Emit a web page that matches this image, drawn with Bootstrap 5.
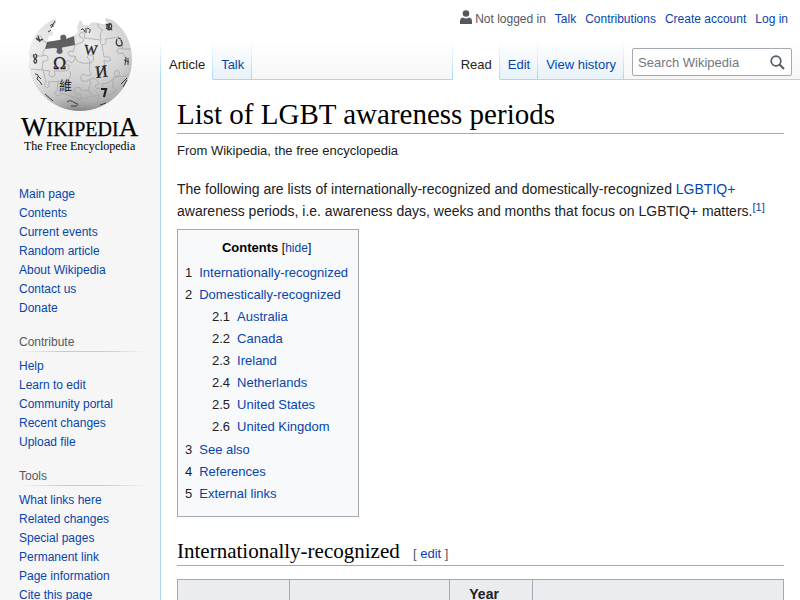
<!DOCTYPE html>
<html lang="en">
<head>
<meta charset="utf-8">
<meta name="viewport" content="width=device-width, initial-scale=1">
<title>List of LGBT awareness periods</title>
<link href="https://cdn.jsdelivr.net/npm/bootstrap@5.3.0/dist/css/bootstrap.min.css" rel="stylesheet">
<style>
  body { font-family: "Liberation Sans", Arial, sans-serif; font-size: 14px; line-height: 22px; color: #202122;
    background: #f6f6f6 linear-gradient(#fff 50%, #f6f6f6 100%) 0 0 / 100% 80px no-repeat; }
  a { color: #0645ad; text-decoration: none; }
  a:hover { text-decoration: underline; }
  .side { width: 160px; padding: 10px 11px 0 19px; font-size: 12px; line-height: 19px; }
  .side-logo { height: 175px; margin-left: -9px; }
  .side-group { margin-bottom: 15px; }
  .side-title { font-size: 12px; line-height: 18px; font-weight: 400; color: #54595d; margin-bottom: 5px; padding-bottom: 1px;
    background: linear-gradient(to right, transparent, #c8ccd1 33%, #c8ccd1 66%, transparent) bottom / 100% 1px no-repeat; }
  .personal { height: 40px; padding: 10px 12px 0 0; gap: 9px; font-size: 12px; line-height: 18px; color: #54595d; }
  .tabs-bar { height: 40px; font-size: 13px; }
  .tab-list { background: linear-gradient(#fff, #a7d7f9) left / 1px 100% no-repeat; padding-left: 1px; }
  .tab-item { padding: 15px 8px 0 8px; line-height: 20px; border-bottom: 1px solid #a7d7f9;
    background: linear-gradient(#fff, #a7d7f9) right / 1px 100% no-repeat, linear-gradient(#fff, #e8f2f8); }
  .tab-item.current { border-bottom-color: #fff; background: linear-gradient(#fff, #a7d7f9) right / 1px 100% no-repeat, #fff; }
  .tab-item.current a { color: #202122; }
  .tab-fill { border-bottom: 1px solid #a7d7f9; }
  .search-zone { padding: 8px 8px 3px 8px; border-bottom: 1px solid #a7d7f9; }
  .search-box { width: 160px; height: 28px; border: 1px solid #a2a9b1; border-radius: 2px; background: #fff; }
  .search-box input { min-width: 0; font-size: 13px; line-height: 20px; padding: 3px 0 1px 5px; color: #202122; }
  .search-box input::placeholder { color: #72777d; opacity: 1; }
  .search-box button { width: 28px; }
  .article { border-left: 1px solid #a7d7f9; background: #fff; padding: 16px 16px 0; }
  h1, h2 { font-family: "Liberation Serif", "Times New Roman", serif; font-weight: 400; color: #000; border-bottom: 1px solid #a2a9b1; }
  h1 { font-size: 29px; line-height: 37px; margin-bottom: 7px; }
  h2 { font-size: 21px; line-height: 27px; margin: 21px 0 13px; }
  .edit-link { font: 13px/13px "Liberation Sans", Arial, sans-serif; color: #54595d; margin-left: 8px; }
  .tagline { font-size: 13px; line-height: 20px; margin-bottom: 17px; }
  .cite { font-size: 11px; line-height: 1px; }
  .toc-box { display: table; border: 1px solid #a2a9b1; background: #f8f9fa; padding: 7px 10px 7px 7px; font-size: 13px; margin-top: 7px; }
  .toc-head { margin-bottom: 3px; color: #000; }
  .toc-head small { font-size: 12px; }
  .toc-box ul { margin-bottom: 0; }
  .toc-box ul ul { padding-left: 27px; margin-bottom: 1px; }
  .toc-box > ul { margin-bottom: 4px; }
  .toc-box li span { margin-right: 7px; }
  .events { width: 100%; table-layout: fixed; border-collapse: collapse; background: #f8f9fa; }
  .events th { border: 1px solid #a2a9b1; background: #eaecf0; padding: 3px 21px 0 7px; text-align: center; }
</style>
<script src="https://cdn.jsdelivr.net/npm/bootstrap@5.3.0/dist/js/bootstrap.bundle.min.js"></script>
</head>
<body>
<div class="d-flex">
  <aside class="side flex-shrink-0">
    <a class="side-logo d-block" href="#" aria-label="Main page">
      <svg width="140" height="150" viewBox="10 10 140 150">
        <defs>
          <radialGradient id="ball" cx=".58" cy=".28" r=".78">
            <stop offset="0" stop-color="#ececec"/><stop offset=".5" stop-color="#d2d2d3"/>
            <stop offset=".8" stop-color="#adadae"/><stop offset="1" stop-color="#737374"/>
          </radialGradient>
          <linearGradient id="shine" x1="0" x2="1"><stop offset="0" stop-color="#fff" stop-opacity=".8"/><stop offset=".45" stop-color="#fff" stop-opacity="0"/></linearGradient>
          <path id="globe" d="M56 19Q51 20 46 24C34 33 29 46 29 60C29 88 52 111 80 111S132 88 132 60C132 46 127 32 117 24Q114 20 109 19L106 18Q104 22 108 23Q104 25 98 23Q91 21 89 25L85 25Q81 24 82 21Q78 20 79 24L77 26L78 32L74 36L67 38Q67 33 62 35Q62 40 57 41L47 41L49 36Q54 36 53 32Q49 31 51 28L56 24Z"/>
          <clipPath id="globeClip"><use href="#globe"/></clipPath>
        </defs>
        <use href="#globe" fill="url(#ball)"/>
        <use href="#globe" fill="url(#shine)"/>
        <path d="M47 42L59 40Q62 40 60 37Q61 34 65 35Q67 37 66 39L74 36L75 45L65 47Q61 47 62 49Q64 53 60 54Q55 53 57 50Q58 48 54 48L45 49Z" fill="#606062"/>
        <g clip-path="url(#globeClip)" fill="none" stroke="#a2a2a4" stroke-width=".7">
          <path d="M45 49Q42 52 43 56Q47 54 48 58Q48 62 43 61L42 70Q48 71 50 71Q47 76 52 77Q57 76 54 71L66 71Q70 70 69 65Q66 66 66 62Q69 59 71 63Q75 62 75 56Q68 57 68 53Q69 50 73 52L75 45"/>
          <path d="M75 45L83 42Q84 37 80 37Q78 33 83 32Q86 33 84 38L101 40Q99 44 103 45Q108 43 105 39L119 37M101 40Q99 33 103 30Q97 28 98 23M119 37Q124 45 122 49Q117 47 117 52Q119 55 123 53Q127 58 127 62M122 49L131 49"/>
          <path d="M75 56Q76 65 90 63Q90 59 87 57Q89 53 93 56Q95 61 90 63Q88 69 91 75Q86 77 83 74Q79 77 82 81Q87 83 90 79Q92 84 88 90Q81 92 80 88Q77 86 74 89Q74 95 79 94Q82 93 80 99L73 106"/>
          <path d="M90 79Q97 77 99 84Q94 84 96 88Q101 90 103 86L102 84Q111 83 115 77Q113 73 116 70Q121 71 119 75L115 77L128 76M42 70L31 69M43 70L46 82Q43 86 47 88Q51 86 48 82L67 81Q72 77 70 71M58 82L57 91Q53 92 56 95Q61 97 61 93L80 99L99 95L97 106M88 90L94 97M114 78L112 87Q117 88 115 92L107 96M43 56L31 56M37 36Q42 34 42 40L47 43M102 45L104 57Q110 56 111 60Q107 63 104 60L105 71"/>
        </g>
        <g fill="#222" stroke="#222" stroke-width=".3" font-family="Liberation Serif, serif">
          <text x="53" y="69" font-size="16" font-family="DejaVu Serif, serif">Ω</text>
          <text x="84" y="54" font-size="14" transform="rotate(4 84 54)">W</text>
          <text x="96" y="78" font-size="17" transform="rotate(-7 96 78)">И</text>
          <text x="59" y="90" font-size="13" stroke="none" font-family="Noto Sans CJK TC, sans-serif">維</text>
        </g>
        <g fill="none" stroke="#3c3c3c" stroke-width="1.3">
          <path d="M101 89L106 89L104 97" stroke="#222" stroke-width="2.2"/>
          <path d="M36 38Q39 42 43 39M38 36L40 42M35 54Q38 55 36 58Q33 59 34 54M34 59Q38 59 36 63Q34 64 34 60"/>
          <path d="M50 26Q53 22 53 27M55 21L51 28M48 32L51 30M81 30Q83 27 85 32M86 28L86 33M87 28Q92 29 89 33" stroke-width="1"/>
          <path d="M106 24L112 30M107 29Q106 23 111 24Q113 28 109 30L106 28M110 23L108 30M117 39Q115 45 119 46Q124 46 121 40M118 38L121 39"/>
          <path d="M35 74Q40 74 37 79Q41 82 42 85M38 76L41 79M126 57L125 65M128 58L128 65M124 60L129 62M127 78L121 84M127 80L123 87M45 94L53 101M100 105L106 103M67 102Q70 99 75 103Q80 104 76 106L71 106" stroke-width="1"/>
        </g>
        <g fill="#000" font-family="Liberation Serif, serif">
          <text x="21" y="136" font-size="27" stroke="#000" stroke-width=".25">W<tspan font-size="20">IKIPEDI</tspan>A</text>
          <text x="24" y="150" font-size="12">The Free Encyclopedia</text>
        </g>
      </svg>
    </a>
    <nav class="side-group" aria-label="Navigation">
      <ul class="list-unstyled mb-0">
        <li><a href="#">Main page</a></li><li><a href="#">Contents</a></li><li><a href="#">Current events</a></li>
        <li><a href="#">Random article</a></li><li><a href="#">About Wikipedia</a></li><li><a href="#">Contact us</a></li>
        <li><a href="#">Donate</a></li>
      </ul>
    </nav>
    <nav class="side-group" aria-labelledby="contribute">
      <h3 class="side-title" id="contribute">Contribute</h3>
      <ul class="list-unstyled mb-0">
        <li><a href="#">Help</a></li><li><a href="#">Learn to edit</a></li><li><a href="#">Community portal</a></li>
        <li><a href="#">Recent changes</a></li><li><a href="#">Upload file</a></li>
      </ul>
    </nav>
    <nav aria-labelledby="tools">
      <h3 class="side-title" id="tools">Tools</h3>
      <ul class="list-unstyled mb-0">
        <li><a href="#">What links here</a></li><li><a href="#">Related changes</a></li><li><a href="#">Special pages</a></li>
        <li><a href="#">Permanent link</a></li><li><a href="#">Page information</a></li><li><a href="#">Cite this page</a></li>
      </ul>
    </nav>
  </aside>
  <div class="flex-grow-1 d-flex flex-column">
    <nav class="personal d-flex justify-content-end" aria-label="Personal tools">
      <span class="d-flex"><svg width="15" height="14" viewBox="0 0 15 14" fill="#54595d"><circle cx="6" cy="3.500" r="3.300"/><path d="M0 14V11Q0 8 3 7.500Q6 9.500 9 7.500Q12 8 12 11V14Z"/></svg>Not logged in</span>
      <a href="#">Talk</a><a href="#">Contributions</a><a href="#">Create account</a><a href="#">Log in</a>
    </nav>
    <div class="tabs-bar d-flex">
      <ul class="tab-list list-unstyled d-flex mb-0">
        <li class="tab-item current"><a href="#">Article</a></li>
        <li class="tab-item"><a href="#">Talk</a></li>
      </ul>
      <div class="tab-fill flex-grow-1"></div>
      <ul class="tab-list list-unstyled d-flex mb-0">
        <li class="tab-item current"><a href="#">Read</a></li>
        <li class="tab-item"><a href="#">Edit</a></li>
        <li class="tab-item"><a href="#">View history</a></li>
      </ul>
      <form class="search-zone">
        <div class="search-box d-flex">
          <input class="border-0 bg-transparent flex-grow-1" type="search" placeholder="Search Wikipedia" aria-label="Search Wikipedia">
          <button class="border-0 bg-transparent p-0 d-flex align-items-center" type="button" aria-label="Search">
            <svg width="15" height="15" viewBox="0 0 15 15" fill="none" stroke="#54595d"><circle cx="6" cy="6" r="4.800" stroke-width="1.700"/><path d="M9.500 9.500L14 14" stroke-width="2"/></svg>
          </button>
        </div>
      </form>
    </div>
    <main class="article flex-grow-1">
      <h1>List of LGBT awareness periods</h1>
      <div class="tagline">From Wikipedia, the free encyclopedia</div>
      <p class="mb-0">The following are lists of internationally-recognized and domestically-recognized <a href="#">LGBTIQ+</a> awareness periods, i.e. awareness days, weeks and months that focus on LGBTIQ+ matters.<sup class="cite"><a href="#">[1]</a></sup></p>
      <nav class="toc-box" aria-label="Contents">
        <div class="toc-head text-center"><b>Contents</b> <small>[<a href="#">hide</a>]</small></div>
        <ul class="list-unstyled">
          <li><span>1</span><a href="#">Internationally-recognized</a></li>
          <li><span>2</span><a href="#">Domestically-recognized</a>
            <ul class="list-unstyled">
              <li><span>2.1</span><a href="#">Australia</a></li>
              <li><span>2.2</span><a href="#">Canada</a></li>
              <li><span>2.3</span><a href="#">Ireland</a></li>
              <li><span>2.4</span><a href="#">Netherlands</a></li>
              <li><span>2.5</span><a href="#">United States</a></li>
              <li><span>2.6</span><a href="#">United Kingdom</a></li>
            </ul>
          </li>
          <li><span>3</span><a href="#">See also</a></li>
          <li><span>4</span><a href="#">References</a></li>
          <li><span>5</span><a href="#">External links</a></li>
        </ul>
      </nav>
      <h2>Internationally-recognized <span class="edit-link">[ <a href="#">edit</a> ]</span></h2>
      <table class="events">
        <colgroup><col style="width:18.500%"><col style="width:26.400%"><col style="width:13.700%"><col></colgroup>
        <thead><tr><th></th><th></th><th>Year</th><th></th></tr></thead>
      </table>
    </main>
  </div>
</div>
</body>
</html>
